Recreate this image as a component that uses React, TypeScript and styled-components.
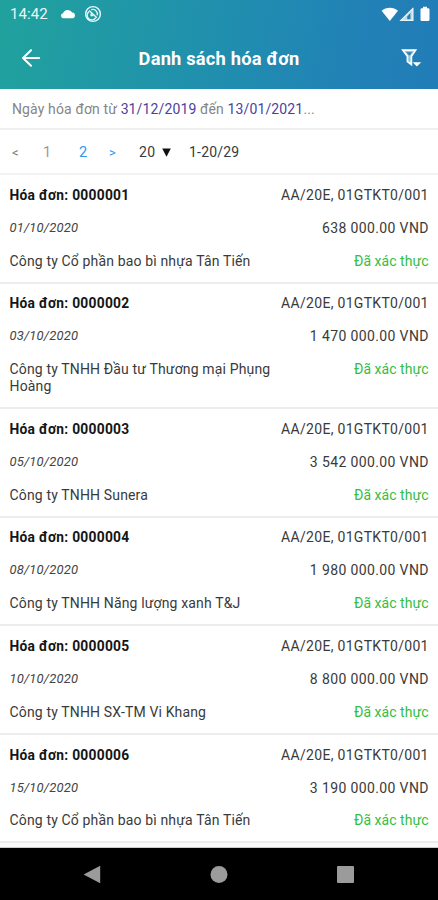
import React from "react";
import styled, { createGlobalStyle } from "styled-components";

const GlobalStyle = createGlobalStyle`
  * { box-sizing: border-box; }
  body { margin: 0; background: #fff; font-family: Roboto, "Noto Sans", sans-serif; }
`;

const Screen = styled.div`
  width: 438px;
  height: 900px;
  display: flex;
  flex-direction: column;
  overflow: hidden;
  background: #fff;
  color: #3a3a3a;
  font-size: 14px;
`;

const Header = styled.header`
  height: 89px;
  flex: none;
  display: flex;
  flex-direction: column;
  color: #fff;
  background: linear-gradient(100deg, #20a29d 0%, #2093ab 40%, #2182b6 80%, #217cb7 100%);
`;

const StatusBar = styled.div`
  height: 28px;
  padding: 0 8px 0 10px;
  display: flex;
  align-items: center;
  justify-content: space-between;
`;

const StatusGroup = styled.div<{ $gap: number }>`
  display: flex;
  align-items: center;
  gap: ${(p) => p.$gap}px;
`;

const Clock = styled.span`
  font-size: 15px;
  line-height: 18px;
  width: 42px;
  letter-spacing: 0.1px;
  color: #e9f7f7;
`;

const TitleBar = styled.div`
  height: 61px;
  display: grid;
  grid-template-columns: 60px 1fr 60px;
  align-items: center;
`;

const Title = styled.h1`
  margin: 0;
  padding-top: 1px;
  text-align: center;
  font-size: 18.3px;
  line-height: 24px;
  font-weight: 700;
  letter-spacing: 0.2px;
`;

const IconButton = styled.button<{ $end?: boolean }>`
  display: flex;
  justify-content: ${(p) => (p.$end ? "flex-end" : "flex-start")};
  padding: ${(p) => (p.$end ? "0 16px 2px 0" : "0 0 2px 21px")};
  border: 0;
  background: none;
  color: inherit;
`;

const DateFilter = styled.div`
  height: 41px;
  flex: none;
  padding: 1px 12px 0;
  display: flex;
  align-items: center;
  white-space: pre;
  color: #858585;
  border-bottom: 2px solid #f0f0f0;
  letter-spacing: 0.13px;
`;

const DateValue = styled.span`
  color: #4b3f9e;
`;

const Pager = styled.nav`
  height: 45px;
  flex: none;
  padding: 2px 12px 0;
  display: grid;
  grid-template-columns: 31px 36px 30px 30px 50px auto;
  align-items: baseline;
  align-content: center;
  justify-content: start;
  border-bottom: 2px solid #f3f3f3;
`;

const PageLink = styled.span<{ $tone: string; $small?: boolean }>`
  color: ${(p) => p.$tone};
  font-size: ${(p) => (p.$small ? 13 : 14.5)}px;
`;

const PageSize = styled.span`
  display: flex;
  align-items: center;
  gap: 6px;
  letter-spacing: 0.4px;
`;

const PageRange = styled.span`
  letter-spacing: 0.2px;
`;

const List = styled.main`
  flex: 1;
  min-height: 0;
  overflow: hidden;
  border-bottom: 1px solid #ccc;
  background: #fafafa;
`;

const Row = styled.article`
  padding: 11.9px 9.5px 11.8px;
  display: flex;
  flex-direction: column;
  gap: 16px;
  line-height: 16.95px;
  background: #fff;
  border-bottom: 2px solid #ececec;
`;

const Line = styled.div`
  display: flex;
  justify-content: space-between;
`;

const InvoiceNo = styled.strong`
  color: #151515;
  font-size: 13.8px;
  font-weight: 700;
  letter-spacing: 0.28px;
`;

const Serial = styled.span`
  margin-right: -0.3px;
  letter-spacing: 0.3px;
`;

const IssueDate = styled.em`
  font-size: 13px;
  letter-spacing: 0.16px;
  color: #444;
`;

const Amount = styled.span`
  margin-right: -0.3px;
  letter-spacing: 0.37px;
`;

const Company = styled.span`
  width: 280px;
  letter-spacing: 0.15px;
`;

const Status = styled.span`
  letter-spacing: 0.03px;
  color: #35bd42;
`;

const NavBar = styled.footer`
  height: 52px;
  flex: none;
  padding: 0 83px 0 82px;
  display: flex;
  align-items: center;
  justify-content: space-between;
  background: #000;
`;

const CloudIcon = () => (
  <svg width="16" height="10" viewBox="0 0 16 10" fill="#fff">
    <path d="M2.8 9.2A2.6 2.6 0 0 1 3 4.2 5.1 5.1 0 0 1 12.2 3.6 2.9 2.9 0 0 1 13.2 9.2Z" />
  </svg>
);

const BlockedSyncIcon = () => (
  <svg width="18" height="18" viewBox="0 0 18 18" fill="none" stroke="#e9f8f8">
    <circle cx="9" cy="9" r="7.4" strokeWidth="1.4" />
    <path d="M5 6.6a4.6 4.6 0 1 0 6.6 6.2M5.2 5.4l7.6 7.4M7.2 4.7a4.6 4.6 0 0 1 6 5.6M7.2 8.4v2.1h2" strokeWidth="1.4" />
  </svg>
);

const WifiIcon = () => (
  <svg width="18" height="15" viewBox="0 0 18 15" fill="#fff">
    <path d="M.6 3.8C5-.3 12.6-.3 17 3.8L8.8 14Z" />
  </svg>
);

const SignalIcon = () => (
  <svg width="16" height="15" viewBox="0 0 16 15">
    <path d="M1 14 14.4.8V14Z" fill="#b9dbeb" />
    <path d="M8.2 9.4 11.4 6V12.2H8.2Z" fill="#247db3" />
    <path d="M1.8 13.4 13.8 1.6V13.4Z" stroke="#e8f4fa" strokeWidth="1.1" fill="none" />
  </svg>
);

const BatteryIcon = () => (
  <svg width="10" height="16" viewBox="0 0 10 16" fill="#fff">
    <path d="M3 .8h4v1.5h1.2q1.3 0 1.3 1.3v10.2q0 1.3-1.3 1.3H1.8q-1.3 0-1.3-1.3V3.6q0-1.3 1.3-1.3H3Z" />
  </svg>
);

const BackIcon = () => (
  <svg width="20" height="18" viewBox="0 0 20 18" fill="none" stroke="#fff" strokeWidth="2" strokeLinecap="round" strokeLinejoin="round">
    <path d="M18.2 9H2M10 1.3 2 9l8 7.7" />
  </svg>
);

const FilterIcon = () => (
  <svg width="21" height="20" viewBox="0 0 21 20">
    <path d="M1.8 2.2H14.6L10.4 8.3v8.2L6.4 13.6V8.3Z" fill="#8fc4de" stroke="#fff" strokeWidth="1.7" />
    <path d="M5.2 4.2h6L8.4 7.6Z" fill="#2380b5" />
    <path d="M11.6 14.3h8.6l-4.3 4.3Z" fill="#fff" />
  </svg>
);

const CaretIcon = () => (
  <svg width="9" height="9" viewBox="0 0 9 9">
    <path d="M.2.6h8.6L4.5 8.8Z" fill="#111" />
  </svg>
);

const NavIcon = ({ kind }: { kind: "back" | "home" | "recent" }) => (
  <svg width="19" height="19" viewBox="0 0 19 19" fill="#9b9b9b">
    {kind === "back" && <path d="M18.2.8v17.4L1.6 9.5Z" />}
    {kind === "home" && <circle cx="10" cy="9.5" r="8.5" />}
    {kind === "recent" && <rect x="1" y="1" width="17" height="17" rx="1" />}
  </svg>
);

const invoices = [
  { no: "0000001", date: "01/10/2020", amount: "638 000.00", company: "Công ty Cổ phần bao bì nhựa Tân Tiến" },
  { no: "0000002", date: "03/10/2020", amount: "1 470 000.00", company: "Công ty TNHH Đầu tư Thương mại Phụng Hoàng" },
  { no: "0000003", date: "05/10/2020", amount: "3 542 000.00", company: "Công ty TNHH Sunera" },
  { no: "0000004", date: "08/10/2020", amount: "1 980 000.00", company: "Công ty TNHH Năng lượng xanh T&J" },
  { no: "0000005", date: "10/10/2020", amount: "8 800 000.00", company: "Công ty TNHH SX-TM Vi Khang" },
  { no: "0000006", date: "15/10/2020", amount: "3 190 000.00", company: "Công ty Cổ phần bao bì nhựa Tân Tiến" },
];

export default function App() {
  return (
    <Screen>
      <GlobalStyle />
      <Header>
        <StatusBar>
          <StatusGroup $gap={8}>
            <Clock>14:42</Clock>
            <CloudIcon />
            <BlockedSyncIcon />
          </StatusGroup>
          <StatusGroup $gap={5}>
            <StatusGroup $gap={0}>
              <WifiIcon />
              <SignalIcon />
            </StatusGroup>
            <BatteryIcon />
          </StatusGroup>
        </StatusBar>
        <TitleBar>
          <IconButton aria-label="Quay lại"><BackIcon /></IconButton>
          <Title>Danh sách hóa đơn</Title>
          <IconButton $end aria-label="Lọc"><FilterIcon /></IconButton>
        </TitleBar>
      </Header>
      <DateFilter>
        Ngày hóa đơn từ <DateValue>31/12/2019</DateValue> đến <DateValue>13/01/2021</DateValue>...
      </DateFilter>
      <Pager>
        <PageLink $tone="#777" $small>&lt;</PageLink>
        <PageLink $tone="#999">1</PageLink>
        <PageLink $tone="#2f96ee">2</PageLink>
        <PageLink $tone="#2f96ee" $small>&gt;</PageLink>
        <PageSize>20 <CaretIcon /></PageSize>
        <PageRange>1-20/29</PageRange>
      </Pager>
      <List>
        {invoices.map((inv) => (
          <Row key={inv.no}>
            <Line>
              <InvoiceNo>Hóa đơn: {inv.no}</InvoiceNo>
              <Serial>AA/20E, 01GTKT0/001</Serial>
            </Line>
            <Line>
              <IssueDate>{inv.date}</IssueDate>
              <Amount>{inv.amount} VND</Amount>
            </Line>
            <Line>
              <Company>{inv.company}</Company>
              <Status>Đã xác thực</Status>
            </Line>
          </Row>
        ))}
      </List>
      <NavBar>
        <NavIcon kind="back" />
        <NavIcon kind="home" />
        <NavIcon kind="recent" />
      </NavBar>
    </Screen>
  );
}
